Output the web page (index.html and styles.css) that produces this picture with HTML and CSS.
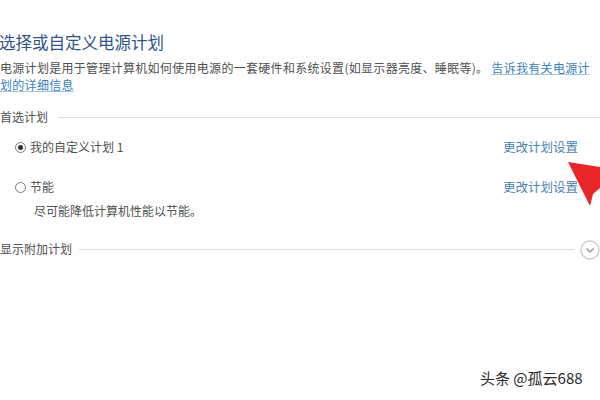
FILE: index.html
```html
<!DOCTYPE html>
<html lang="zh-CN">
<head>
<meta charset="utf-8">
<link rel="stylesheet" href="styles.css">
</head>
<body>
<div class="page">
  <h1 class="title">选择或自定义电源计划</h1>
  <p class="desc">电源计划是用于管理计算机如何使用电源的一套硬件和系统设置(如显示器亮度、睡眠等)。 <a class="link">告诉我有关电源计划的详细信息</a></p>

  <div class="section-head"><span class="label">首选计划</span><span class="rule"></span></div>

  <div class="plan">
    <div class="plan-main">
      <span class="radio checked"></span>
      <span class="plan-name">我的自定义计划 1</span>
    </div>
    <a class="change">更改计划设置</a>
  </div>

  <div class="plan plan-second">
    <div class="plan-main">
      <span class="radio"></span>
      <span class="plan-name">节能</span>
    </div>
    <a class="change">更改计划设置</a>
  </div>
  <p class="plan-desc">尽可能降低计算机性能以节能。</p>

  <div class="more">
    <span class="label">显示附加计划</span>
    <span class="rule rule-short"></span>
    <span class="chev">
      <svg width="20" height="20" viewBox="0 0 20 20"><circle cx="10" cy="10" r="9" fill="none" stroke="#c8c8c8" stroke-width="1.3"/><path d="M6.5 8.5 L10 12 L13.5 8.5" fill="none" stroke="#9a9a9a" stroke-width="1.5"/></svg>
    </span>
  </div>
</div>

<svg class="arrow" width="40" height="60" viewBox="0 0 40 60"><polygon points="8,12 40,17 40,38 33,44 30,56" fill="#e8262a"/></svg>

<div class="watermark">头条 @孤云688</div>
</body>
</html>
```

FILE: styles.css
```css
html, body {
  margin: 0;
  padding: 0;
  background: #ffffff;
}
body {
  width: 600px;
  height: 400px;
  overflow: hidden;
  position: relative;
  font-family: "Noto Sans CJK SC", "Noto Sans", sans-serif;
  color: #4a4a4a;
}
.page {
  padding: 32px 0 0 0;
}
.title {
  margin: 0 0 0 -1px;
  font-size: 16.5px;
  line-height: 20px;
  font-weight: 400;
  color: #2f5586;
}
.desc {
  margin: 7px 0 0 0;
  font-size: 12px;
  line-height: 17px;
  letter-spacing: 0.3px;
  color: #505050;
}
.link {
  color: #3b7fb8;
  text-decoration: underline;
  text-decoration-color: #9cc3e0;
}
.section-head {
  display: flex;
  align-items: center;
  gap: 10px;
  margin-top: 16px;
  height: 16px;
}
.label {
  font-size: 12px;
  line-height: 16px;
  color: #505050;
  white-space: nowrap;
}
.rule {
  flex: 1;
  height: 1px;
  background: #dcdcdc;
}
.plan {
  display: flex;
  align-items: center;
  justify-content: space-between;
  padding: 0 22px 0 15px;
  margin-top: 14px;
  height: 16px;
}
.plan-second {
  margin-top: 24px;
}
.plan-main {
  display: flex;
  align-items: center;
  gap: 4px;
}
.radio {
  width: 11px;
  height: 11px;
  border: 1px solid #7a7a7a;
  border-radius: 50%;
  box-sizing: border-box;
  position: relative;
  background: #fff;
}
.radio.checked::after {
  content: "";
  position: absolute;
  left: 2px;
  top: 2px;
  width: 5px;
  height: 5px;
  border-radius: 50%;
  background: #333;
}
.plan-name {
  font-size: 12px;
  line-height: 16px;
  color: #505050;
}
.change {
  font-size: 12.5px;
  line-height: 16px;
  color: #4a82ad;
}
.plan-desc {
  margin: 8px 0 0 34px;
  font-size: 12px;
  line-height: 16px;
  color: #505050;
}
.more {
  display: flex;
  align-items: center;
  gap: 6px;
  margin-top: 20px;
  height: 20px;
}
.rule-short {
  margin-left: 1px;
}
.chev {
  display: flex;
  width: 20px;
  height: 20px;
  margin-top: 2px;
}
.arrow {
  position: absolute;
  left: 560px;
  top: 150px;
}
.watermark {
  position: absolute;
  left: 480px;
  top: 368px;
  font-size: 15px;
  line-height: 20px;
  color: #2a2a2a;
  text-shadow: 0 0 2px #fff, 0 0 2px #fff;
}
```
